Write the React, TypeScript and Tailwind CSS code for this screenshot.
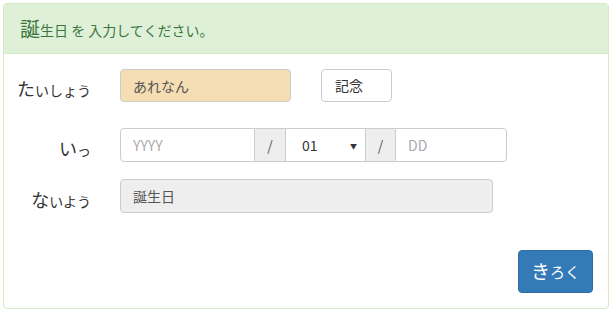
import React from 'react';

const font = { fontFamily: '"Noto Sans CJK JP", "Noto Sans", sans-serif' };

function Label({ big, small }: { big: string; small: string }) {
  return (
    <div className="w-[116px] shrink-0 pr-[29px] pt-[6px] text-right text-[#333]">
      <span className="text-[18px]">{big}</span>
      <span className="text-[14px]">{small}</span>
    </div>
  );
}

export default function App() {
  const [title, setTitle] = React.useState('あれなん');

  return (
    <div className="w-[612px] h-[312px] bg-white pt-[3px] pl-[3px]" style={font}>
      <div className="w-[606px] h-[306px] border border-[#d6e9c6] rounded-[4px] flex flex-col">
        {/* heading */}
        <div className="h-[50px] bg-[#dff0d8] border-b border-[#d6e9c6] rounded-t-[3px] flex items-center pl-[16px] text-[#3c763d]">
          <span className="text-[20px]">誕</span>
          <span className="text-[14px] mt-[3px]">生日 を 入力してください。</span>
        </div>

        {/* body */}
        <div className="flex-1 flex flex-col">
          <div className="flex items-center h-[33px] mt-[15px]">
            <Label big="た" small="いしょう" />
            <input
              value={title}
              onChange={(e) => setTitle(e.target.value)}
              className="w-[171px] h-[33px] px-[12px] text-[14px] text-[#555] bg-[#f5deb3] border border-[#ccc] rounded-[4px] outline-none"
            />
            <button className="ml-[30px] w-[71px] h-[33px] px-[13px] text-left text-[14px] text-[#333] bg-white border border-[#ccc] rounded-[4px]">
              記念
            </button>
          </div>

          <div className="flex items-center h-[34px] mt-[26px]">
            <Label big="い" small="っ" />
            <div className="flex h-[34px] text-[14px]">
              <input
                placeholder="YYYY"
                className="w-[135px] h-full px-[12px] border border-[#ccc] rounded-l-[4px] outline-none placeholder:text-[#aaa]"
              />
              <span className="w-[30px] h-full flex items-center justify-center bg-[#eee] border-y border-[#ccc] text-[#555]">/</span>
              <div className="relative w-[81px] h-full border border-[#ccc] flex items-center pl-[16px] text-[#333]">
                01
                <span className="absolute right-[8px] top-[12px] text-[7px] text-[#333]">▼</span>
              </div>
              <span className="w-[29px] h-full flex items-center justify-center bg-[#eee] border-y border-[#ccc] text-[#555]">/</span>
              <input
                placeholder="DD"
                className="w-[112px] h-full px-[12px] border border-[#ccc] rounded-r-[4px] outline-none placeholder:text-[#aaa]"
              />
            </div>
          </div>

          <div className="flex items-center h-[34px] mt-[17px]">
            <Label big="な" small="いよう" />
            <input
              readOnly
              value="誕生日"
              className="w-[373px] h-[34px] px-[12px] text-[14px] text-[#555] bg-[#eee] border border-[#ccc] rounded-[4px] outline-none"
            />
          </div>

          <div className="flex justify-end mt-[37px] pr-[15px]">
            <button className="w-[75px] h-[43px] bg-[#337ab7] border border-[#2e6da4] rounded-[4px] text-white flex items-center justify-center">
              <span className="text-[19px]">き</span>
              <span className="text-[15px] mt-[2px]">ろく</span>
            </button>
          </div>
        </div>
      </div>
    </div>
  );
}
